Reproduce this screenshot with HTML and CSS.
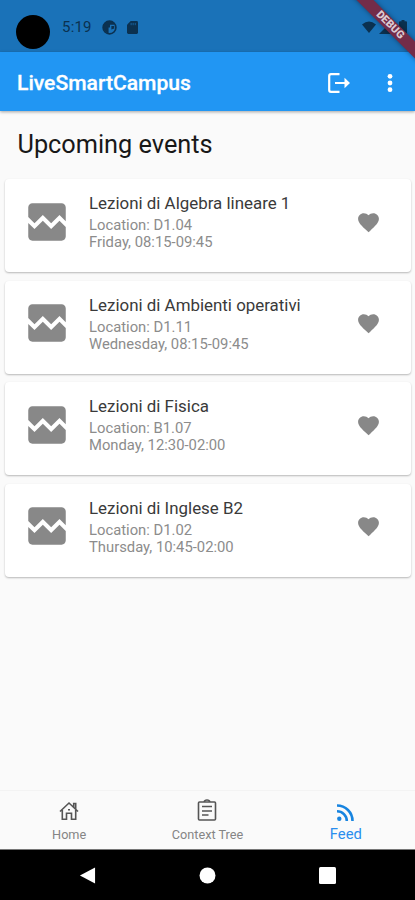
FILE: index.html
```html
<!DOCTYPE html>
<html lang="it">
<head>
    <meta charset="UTF-8">
    <meta name="viewport" content="width=device-width, initial-scale=1.0">
    <title>LiveSmartCampus</title>
    <link rel="stylesheet" href="styles.css">
</head>
<body>
    <!-- Shared icons -->
    <svg class="sprite">
        <symbol id="broken" viewBox="0 0 24 24">
            <path d="M21 5v6.59l-3-3.01-4 4.01-4-4-4 4-3-3.01V5c0-1.1.9-2 2-2h14c1.1 0 2 .9 2 2zm-3 6.42l3 3.01V19c0 1.1-.9 2-2 2H5c-1.1 0-2-.9-2-2v-6.58l3 2.99 4-4 4 4 4-3.99z"/>
        </symbol>
        <symbol id="heart" viewBox="0 0 24 24">
            <path d="M12 21.35l-1.45-1.32C5.4 15.36 2 12.28 2 8.5 2 5.42 4.42 3 7.5 3c1.74 0 3.41.81 4.5 2.09C13.09 3.81 14.76 3 16.5 3 19.58 3 22 5.42 22 8.5c0 3.78-3.4 6.86-8.55 11.54L12 21.35z"/>
        </symbol>
    </svg>

    <div class="phone">
        <div class="status-bar">
            <span class="camera"></span>
            <span class="clock">5:19</span>
            <svg class="status-app" viewBox="0 0 16 16">
                <circle cx="8" cy="8" r="6.8" fill="none" stroke="currentColor" stroke-width="1.8"/>
                <path d="M1.5 5C4 .8 10 .2 13 3.2V5H8.5v3H7v6.5C2.5 13 .5 9 1.5 5z" fill="currentColor"/>
                <path d="M10 6.5h3V9l-3 1z" fill="currentColor"/>
            </svg>
            <svg class="status-sd" viewBox="0 0 12 14">
                <path d="M4 0h6.5Q12 0 12 1.5v11Q12 14 10.5 14h-9Q0 14 0 12.5V4z" fill="currentColor"/>
                <path d="M4.5 2v2.5M6.7 2v2.5M9 2v2.5" stroke="#1a72b8" stroke-width=".8"/>
            </svg>
            <div class="status-right">
                <svg class="wifi" viewBox="0 0 14 12"><path d="M7 12L0 3.5Q7-2.5 14 3.5z"/></svg>
                <svg class="signal" viewBox="0 0 14 14"><path d="M14 0v14H0z"/></svg>
                <svg class="battery" viewBox="0 0 8 14"><path d="M2.5 0h3v1.3H7q1 0 1 1V13q0 1-1 1H1q-1 0-1-1V2.3q0-1 1-1h1.5z"/></svg>
            </div>
        </div>
        <div class="debug-banner">DEBUG</div>

        <header class="app-bar">
            <h1>LiveSmartCampus</h1>
            <svg class="logout" viewBox="0 0 22 20">
                <path d="M11.5 1.2H3Q1.2 1.2 1.2 3v14q0 1.8 1.8 1.8h8.5M7 10h12"/>
                <path class="arrow" d="M16.5 4.8L22 10l-5.5 5.2z"/>
            </svg>
            <svg class="more" viewBox="0 0 6 20">
                <circle cx="3" cy="3.3" r="2.4"/>
                <circle cx="3" cy="10" r="2.4"/>
                <circle cx="3" cy="16.7" r="2.4"/>
            </svg>
        </header>

        <main class="content">
            <h2>Upcoming events</h2>
            <div class="card">
                <svg class="thumb"><use href="#broken"/></svg>
                <div class="info">
                    <h3>Lezioni di Algebra lineare 1</h3>
                    <p>Location: D1.04</p>
                    <p>Friday, 08:15-09:45</p>
                </div>
                <svg class="fav"><use href="#heart"/></svg>
            </div>
            <div class="card">
                <svg class="thumb"><use href="#broken"/></svg>
                <div class="info">
                    <h3>Lezioni di Ambienti operativi</h3>
                    <p>Location: D1.11</p>
                    <p>Wednesday, 08:15-09:45</p>
                </div>
                <svg class="fav"><use href="#heart"/></svg>
            </div>
            <div class="card">
                <svg class="thumb"><use href="#broken"/></svg>
                <div class="info">
                    <h3>Lezioni di Fisica</h3>
                    <p>Location: B1.07</p>
                    <p>Monday, 12:30-02:00</p>
                </div>
                <svg class="fav"><use href="#heart"/></svg>
            </div>
            <div class="card">
                <svg class="thumb"><use href="#broken"/></svg>
                <div class="info">
                    <h3>Lezioni di Inglese B2</h3>
                    <p>Location: D1.02</p>
                    <p>Thursday, 10:45-02:00</p>
                </div>
                <svg class="fav"><use href="#heart"/></svg>
            </div>
        </main>

        <nav class="tabs">
            <a class="tab">
                <svg viewBox="0 0 20 20">
                    <path d="M1 10.5L10 2l9 8.5M3.3 9v9.3h4.2v-6h5v6h4.2V9M14.7 6V2.5h2V8M9 8.8h2"/>
                </svg>
                <span>Home</span>
            </a>
            <a class="tab tab-tree">
                <svg viewBox="0 0 20 22">
                    <path d="M2.5 3h15q1 0 1 1v16q0 1-1 1h-15q-1 0-1-1V4q0-1 1-1zM7 3q.5-2 3-2t3 2M5 7.5h10M5 12h10M5 16h6.5"/>
                </svg>
                <span>Context Tree</span>
            </a>
            <a class="tab active">
                <svg viewBox="0 0 17 17">
                    <circle cx="2.3" cy="14.7" r="2.2"/>
                    <path d="M0 7.2a9.8 9.8 0 0 1 9.8 9.8M0 1.5A15.5 15.5 0 0 1 15.5 17"/>
                </svg>
                <span>Feed</span>
            </a>
        </nav>

        <div class="system-nav">
            <div><svg viewBox="0 0 16 18"><path d="M16 .5v17L0 9z"/></svg></div>
            <div><svg viewBox="0 0 16 16"><circle cx="8" cy="8" r="7.5"/></svg></div>
            <div><svg viewBox="0 0 17 17"><rect width="17" height="17" rx="1.5"/></svg></div>
        </div>
    </div>
</body>
</html>
```
FILE: styles.css
```css
* {
    box-sizing: border-box;
    margin: 0;
    padding: 0;
}

body {
    font-family: Roboto, sans-serif;
    background: #fafafa;
}

.sprite {
    display: none;
}

.phone {
    position: relative;
    display: flex;
    flex-direction: column;
    width: 415px;
    height: 900px;
    overflow: hidden;
    background: #fafafa;
}

/* Status bar */
.status-bar {
    display: flex;
    align-items: center;
    height: 52px;
    padding: 2px 8px 0 16px;
    background: #1a72b8;
    color: #0b3150;
}

.camera {
    width: 34px;
    height: 34px;
    margin-top: 9px;
    border-radius: 50%;
    background: #000;
}

.clock {
    width: 40px;
    margin-left: 12px;
    font-size: 15px;
    letter-spacing: 0.2px;
}

.status-app {
    width: 15px;
    height: 15px;
}

.status-sd {
    width: 11px;
    height: 13px;
    margin-left: 10px;
}

.status-right {
    display: flex;
    align-items: center;
    margin-left: auto;
    fill: #0b3150;
}

.wifi {
    width: 14px;
    height: 12px;
}

.signal {
    width: 14px;
    height: 14px;
    margin-left: 3px;
}

.battery {
    width: 8px;
    height: 14px;
    margin-left: 6px;
}

.debug-banner {
    position: absolute;
    top: 18.5px;
    left: 340px;
    width: 100px;
    height: 12px;
    transform: rotate(45deg);
    background: #732c49;
    box-shadow: 0 0 5px rgba(0, 0, 0, 0.4);
    color: #dccbd3;
    font-size: 10.8px;
    font-weight: 900;
    line-height: 12px;
    text-align: center;
}

/* App bar */
.app-bar {
    display: flex;
    align-items: center;
    height: 59px;
    padding: 2px 22px 0 17px;
    background: #2196f3;
    box-shadow: 0 1px 3px rgba(0, 0, 0, 0.35);
    color: #fff;
}

.app-bar h1 {
    flex: 1;
    font-size: 21.1px;
    font-weight: 500;
    -webkit-text-stroke: 0.3px #fff;
}

.logout {
    width: 22px;
    height: 20px;
    fill: none;
    stroke: #fff;
    stroke-width: 2.2;
}

.logout .arrow {
    fill: #fff;
    stroke: none;
}

.more {
    width: 6px;
    height: 20px;
    margin-left: 37px;
    fill: #fff;
}

/* Events */
.content {
    flex: 1;
    padding: 18px 4px 0 5px;
}

.content h2 {
    height: 50px;
    padding-left: 12.5px;
    font-size: 25.3px;
    font-weight: 400;
    line-height: 31px;
    color: #181818;
}

.card {
    display: flex;
    height: 93px;
    margin-bottom: 8.5px;
    padding: 15px 30px 0 17px;
    border-radius: 4px;
    background: #fff;
    box-shadow: 0 1px 2px rgba(0, 0, 0, 0.27);
}

.thumb {
    width: 50px;
    height: 50px;
    margin-top: 2.5px;
    fill: #888;
}

.info {
    flex: 1;
    padding-left: 17px;
}

.info h3 {
    font-size: 16.9px;
    font-weight: 400;
    line-height: 18px;
    margin-bottom: 5px;
    color: #3a3a3a;
}

.info p {
    font-size: 14.8px;
    line-height: 17px;
    color: #8c8c8c;
}

.fav {
    width: 25px;
    height: 25px;
    margin-top: 15.5px;
    fill: #888;
}

/* Bottom tabs */
.tabs {
    display: flex;
    height: 60px;
    border-top: 1px solid #f3f3f3;
    border-bottom: 1px solid #777;
}

.tab {
    display: flex;
    flex: 1;
    flex-direction: column;
    align-items: center;
    padding-top: 10px;
    font-size: 12.7px;
    color: #858585;
}

.tab svg {
    width: 20px;
    height: 20px;
    fill: none;
    stroke: #555;
    stroke-width: 1.6;
}

.tab span {
    margin-top: 6px;
    line-height: 15px;
}

.tab-tree {
    padding-top: 8px;
}

.tab-tree svg {
    height: 22px;
}

.tab.active {
    padding-top: 12px;
    font-size: 14.8px;
    color: #2a8eee;
}

.tab.active svg {
    width: 17px;
    height: 17px;
    margin-top: 1px;
    stroke: #1784e0;
    stroke-width: 2.6;
}

.tab.active circle {
    fill: #1784e0;
    stroke: none;
}

/* Android navigation */
.system-nav {
    display: flex;
    justify-content: center;
    height: 50px;
    background: #000;
    fill: #fff;
}

.system-nav div {
    display: flex;
    align-items: center;
    justify-content: center;
    width: 120px;
}

.system-nav svg {
    width: 17px;
    height: 17px;
}
```
